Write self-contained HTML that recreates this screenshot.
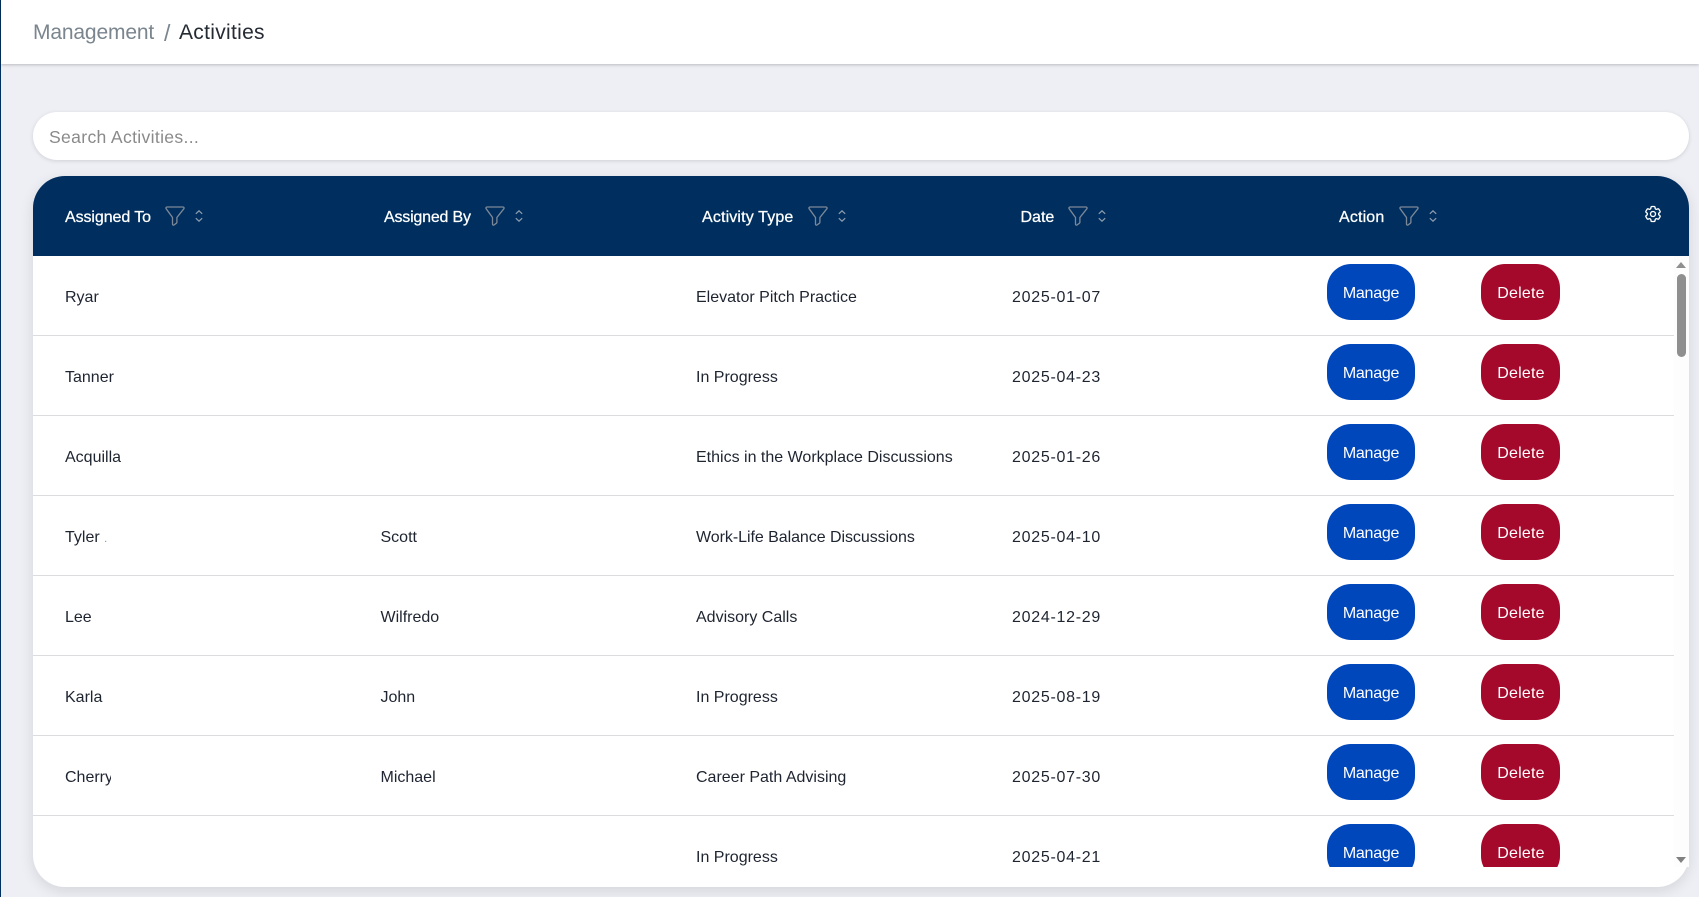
<!DOCTYPE html>
<html lang="en">
<head>
<meta charset="utf-8">
<title>Activities</title>
<style>
*{box-sizing:border-box;margin:0;padding:0}
html,body{width:1699px;height:897px;overflow:hidden;background:#edeff5;font-family:"Liberation Sans",sans-serif}
.strip{position:absolute;left:0;top:0;width:1px;height:897px;background:#00305f}
.top{position:absolute;left:1px;top:0;width:1698px;height:64px;background:#fff;box-shadow:0 1px 3px rgba(0,0,0,.22)}
.crumb{position:absolute;top:17px;line-height:32px;font-size:21px;white-space:nowrap}
.search{position:absolute;left:33px;top:112px;width:1656px;height:48px;border-radius:24px;background:#fff;box-shadow:0 1px 4px rgba(0,0,0,.13)}
.search span{position:absolute;left:16px;top:1px;line-height:48px;font-size:17.6px;color:#8a8a8a;letter-spacing:.32px;white-space:nowrap}
.card{position:absolute;left:33px;top:176px;width:1656px;height:711px;border-radius:32px;background:#fff;box-shadow:0 4px 14px rgba(0,0,0,.11)}
.head{position:absolute;left:0;top:0;width:1656px;height:80px;background:#002f5f;border-radius:32px 32px 0 0}
.th{position:absolute;top:30px;line-height:24px;font-size:16px;color:#fff;white-space:nowrap;letter-spacing:-.08px;-webkit-text-stroke:.25px #fff}
.head svg{position:absolute}
.body{position:absolute;left:0;top:80px;width:1641px;height:611px;overflow:hidden}
.row{position:absolute;left:0;width:1641px;height:80px;border-bottom:1px solid #dcdcde}
.row.last{border-bottom:0}
.td{position:absolute;top:30px;line-height:24px;font-size:16px;color:#1e2430;white-space:nowrap;letter-spacing:0}
.c1{left:32px}.c2{left:347.5px}.c3{left:663px}.c4{left:979px;letter-spacing:.72px}
.btn{position:absolute;top:8px;height:56px;border-radius:24px;color:#fff;font-size:16px;line-height:60px;text-align:center;letter-spacing:.2px}
.m{left:1294px;width:88px;background:#0047bb;letter-spacing:-.25px}
.d{left:1448px;width:79px;background:#a4082a;padding-left:1px}
.track{position:absolute;left:1641px;top:80px;width:15px;height:611px;background:#fdfdfd}
.thumb{position:absolute;left:3px;top:18px;width:9px;height:83px;border-radius:5px;background:#8f8f8f}
.up,.down{position:absolute;left:2px;width:0;height:0;border-left:5.5px solid transparent;border-right:5.5px solid transparent}
.up{top:6px;border-bottom:6px solid #8f8f8f}
.down{top:601px;border-top:6px solid #808080}
</style>
</head>
<body>
<div class="strip"></div>
<div class="top">
  <div class="crumb" style="left:32px;color:#7a858e;letter-spacing:-.15px">Management</div>
  <div class="crumb" style="left:163px;color:#7a858e;font-size:23px">/</div>
  <div class="crumb" style="left:178px;color:#252b33;letter-spacing:.3px">Activities</div>
</div>
<div class="search"><span>Search Activities...</span></div>
<div class="card">
  <div class="head">
    <div class="th" style="left:32px">Assigned To</div>
    <svg style="left:132px;top:30px" width="20" height="20" viewBox="0 0 20 20" fill="none" stroke="#7d8896" stroke-width="1.3"><path d="M2 1C1 1 .6 2 1.2 2.8L7.5 11.5V18.2c0 .9 1 1.1 1.6.7l2.2-1.6c.4-.3.6-.7.6-1.1V11.5L18.8 2.8C19.4 2 19 1 18 1Z"/></svg>
    <svg style="left:162px;top:34px" width="8" height="12" viewBox="0 0 8 12" fill="none" stroke="#8f9dac" stroke-width="1.2"><path d="M.8 3.8 4 .8l3.2 3M.8 8.2 4 11.2l3.2-3"/></svg>
    <div class="th" style="left:351px;letter-spacing:-.2px">Assigned By</div>
    <svg style="left:452px;top:30px" width="20" height="20" viewBox="0 0 20 20" fill="none" stroke="#7d8896" stroke-width="1.3"><path d="M2 1C1 1 .6 2 1.2 2.8L7.5 11.5V18.2c0 .9 1 1.1 1.6.7l2.2-1.6c.4-.3.6-.7.6-1.1V11.5L18.8 2.8C19.4 2 19 1 18 1Z"/></svg>
    <svg style="left:482px;top:34px" width="8" height="12" viewBox="0 0 8 12" fill="none" stroke="#8f9dac" stroke-width="1.2"><path d="M.8 3.8 4 .8l3.2 3M.8 8.2 4 11.2l3.2-3"/></svg>
    <div class="th" style="left:669px;letter-spacing:.15px">Activity Type</div>
    <svg style="left:775px;top:30px" width="20" height="20" viewBox="0 0 20 20" fill="none" stroke="#7d8896" stroke-width="1.3"><path d="M2 1C1 1 .6 2 1.2 2.8L7.5 11.5V18.2c0 .9 1 1.1 1.6.7l2.2-1.6c.4-.3.6-.7.6-1.1V11.5L18.8 2.8C19.4 2 19 1 18 1Z"/></svg>
    <svg style="left:805px;top:34px" width="8" height="12" viewBox="0 0 8 12" fill="none" stroke="#8f9dac" stroke-width="1.2"><path d="M.8 3.8 4 .8l3.2 3M.8 8.2 4 11.2l3.2-3"/></svg>
    <div class="th" style="left:987.5px;letter-spacing:0">Date</div>
    <svg style="left:1035px;top:30px" width="20" height="20" viewBox="0 0 20 20" fill="none" stroke="#7d8896" stroke-width="1.3"><path d="M2 1C1 1 .6 2 1.2 2.8L7.5 11.5V18.2c0 .9 1 1.1 1.6.7l2.2-1.6c.4-.3.6-.7.6-1.1V11.5L18.8 2.8C19.4 2 19 1 18 1Z"/></svg>
    <svg style="left:1065px;top:34px" width="8" height="12" viewBox="0 0 8 12" fill="none" stroke="#8f9dac" stroke-width="1.2"><path d="M.8 3.8 4 .8l3.2 3M.8 8.2 4 11.2l3.2-3"/></svg>
    <div class="th" style="left:1306px;letter-spacing:.15px">Action</div>
    <svg style="left:1366px;top:30px" width="20" height="20" viewBox="0 0 20 20" fill="none" stroke="#7d8896" stroke-width="1.3"><path d="M2 1C1 1 .6 2 1.2 2.8L7.5 11.5V18.2c0 .9 1 1.1 1.6.7l2.2-1.6c.4-.3.6-.7.6-1.1V11.5L18.8 2.8C19.4 2 19 1 18 1Z"/></svg>
    <svg style="left:1396px;top:34px" width="8" height="12" viewBox="0 0 8 12" fill="none" stroke="#8f9dac" stroke-width="1.2"><path d="M.8 3.8 4 .8l3.2 3M.8 8.2 4 11.2l3.2-3"/></svg>
    <svg style="left:1610px;top:28px" width="20" height="20" viewBox="0 0 24 24" fill="none" stroke="#fff" stroke-width="1.6" stroke-linecap="round" stroke-linejoin="round"><path d="M9.594 3.94c.09-.542.56-.94 1.11-.94h2.593c.55 0 1.02.398 1.11.94l.213 1.281c.063.374.313.686.645.87.074.04.147.083.22.127.325.196.72.257 1.075.124l1.217-.456a1.125 1.125 0 0 1 1.37.49l1.296 2.247a1.125 1.125 0 0 1-.26 1.431l-1.003.827c-.293.241-.438.613-.43.992a7.723 7.723 0 0 1 0 .255c-.008.378.137.75.43.991l1.004.827c.424.35.534.955.26 1.43l-1.298 2.247a1.125 1.125 0 0 1-1.369.491l-1.217-.456c-.355-.133-.75-.072-1.076.124a6.47 6.47 0 0 1-.22.128c-.331.183-.581.495-.644.869l-.213 1.281c-.09.543-.56.94-1.11.94h-2.594c-.55 0-1.019-.398-1.11-.94l-.213-1.281c-.062-.374-.312-.686-.644-.87a6.52 6.52 0 0 1-.22-.127c-.325-.196-.72-.257-1.076-.124l-1.217.456a1.125 1.125 0 0 1-1.369-.49l-1.297-2.247a1.125 1.125 0 0 1 .26-1.431l1.004-.827c.292-.24.437-.613.43-.991a6.932 6.932 0 0 1 0-.255c.007-.38-.138-.751-.43-.992l-1.004-.827a1.125 1.125 0 0 1-.26-1.43l1.297-2.247a1.125 1.125 0 0 1 1.37-.491l1.216.456c.356.133.751.072 1.076-.124.072-.044.146-.086.22-.128.332-.183.582-.495.644-.869l.214-1.28Z"/><circle cx="12" cy="12" r="3"/></svg>
  </div>
  <div class="body">
    <div class="row" style="top:0"><div class="td c1">Ryar</div><div class="td c3">Elevator Pitch Practice</div><div class="td c4">2025-01-07</div><div class="btn m">Manage</div><div class="btn d">Delete</div></div>
    <div class="row" style="top:80px"><div class="td c1">Tanner</div><div class="td c3">In Progress</div><div class="td c4">2025-04-23</div><div class="btn m">Manage</div><div class="btn d">Delete</div></div>
    <div class="row" style="top:160px"><div class="td c1">Acquilla</div><div class="td c3">Ethics in the Workplace Discussions</div><div class="td c4">2025-01-26</div><div class="btn m">Manage</div><div class="btn d">Delete</div></div>
    <div class="row" style="top:240px"><div class="td c1">Tyler <span style="font-size:11px;color:#8a9199">.</span></div><div class="td c2">Scott</div><div class="td c3" style="letter-spacing:-.05px">Work-Life Balance Discussions</div><div class="td c4">2025-04-10</div><div class="btn m">Manage</div><div class="btn d">Delete</div></div>
    <div class="row" style="top:320px"><div class="td c1">Lee</div><div class="td c2">Wilfredo</div><div class="td c3">Advisory Calls</div><div class="td c4">2024-12-29</div><div class="btn m">Manage</div><div class="btn d">Delete</div></div>
    <div class="row" style="top:400px"><div class="td c1">Karla</div><div class="td c2">John</div><div class="td c3">In Progress</div><div class="td c4">2025-08-19</div><div class="btn m">Manage</div><div class="btn d">Delete</div></div>
    <div class="row" style="top:480px"><div class="td c1" style="width:46px;overflow:hidden">Cherry</div><div class="td c2">Michael</div><div class="td c3">Career Path Advising</div><div class="td c4">2025-07-30</div><div class="btn m">Manage</div><div class="btn d">Delete</div></div>
    <div class="row last" style="top:560px"><div class="td c3">In Progress</div><div class="td c4">2025-04-21</div><div class="btn m">Manage</div><div class="btn d">Delete</div></div>
  </div>
  <div class="track"><div class="up"></div><div class="thumb"></div><div class="down"></div></div>
</div>
</body>
</html>
